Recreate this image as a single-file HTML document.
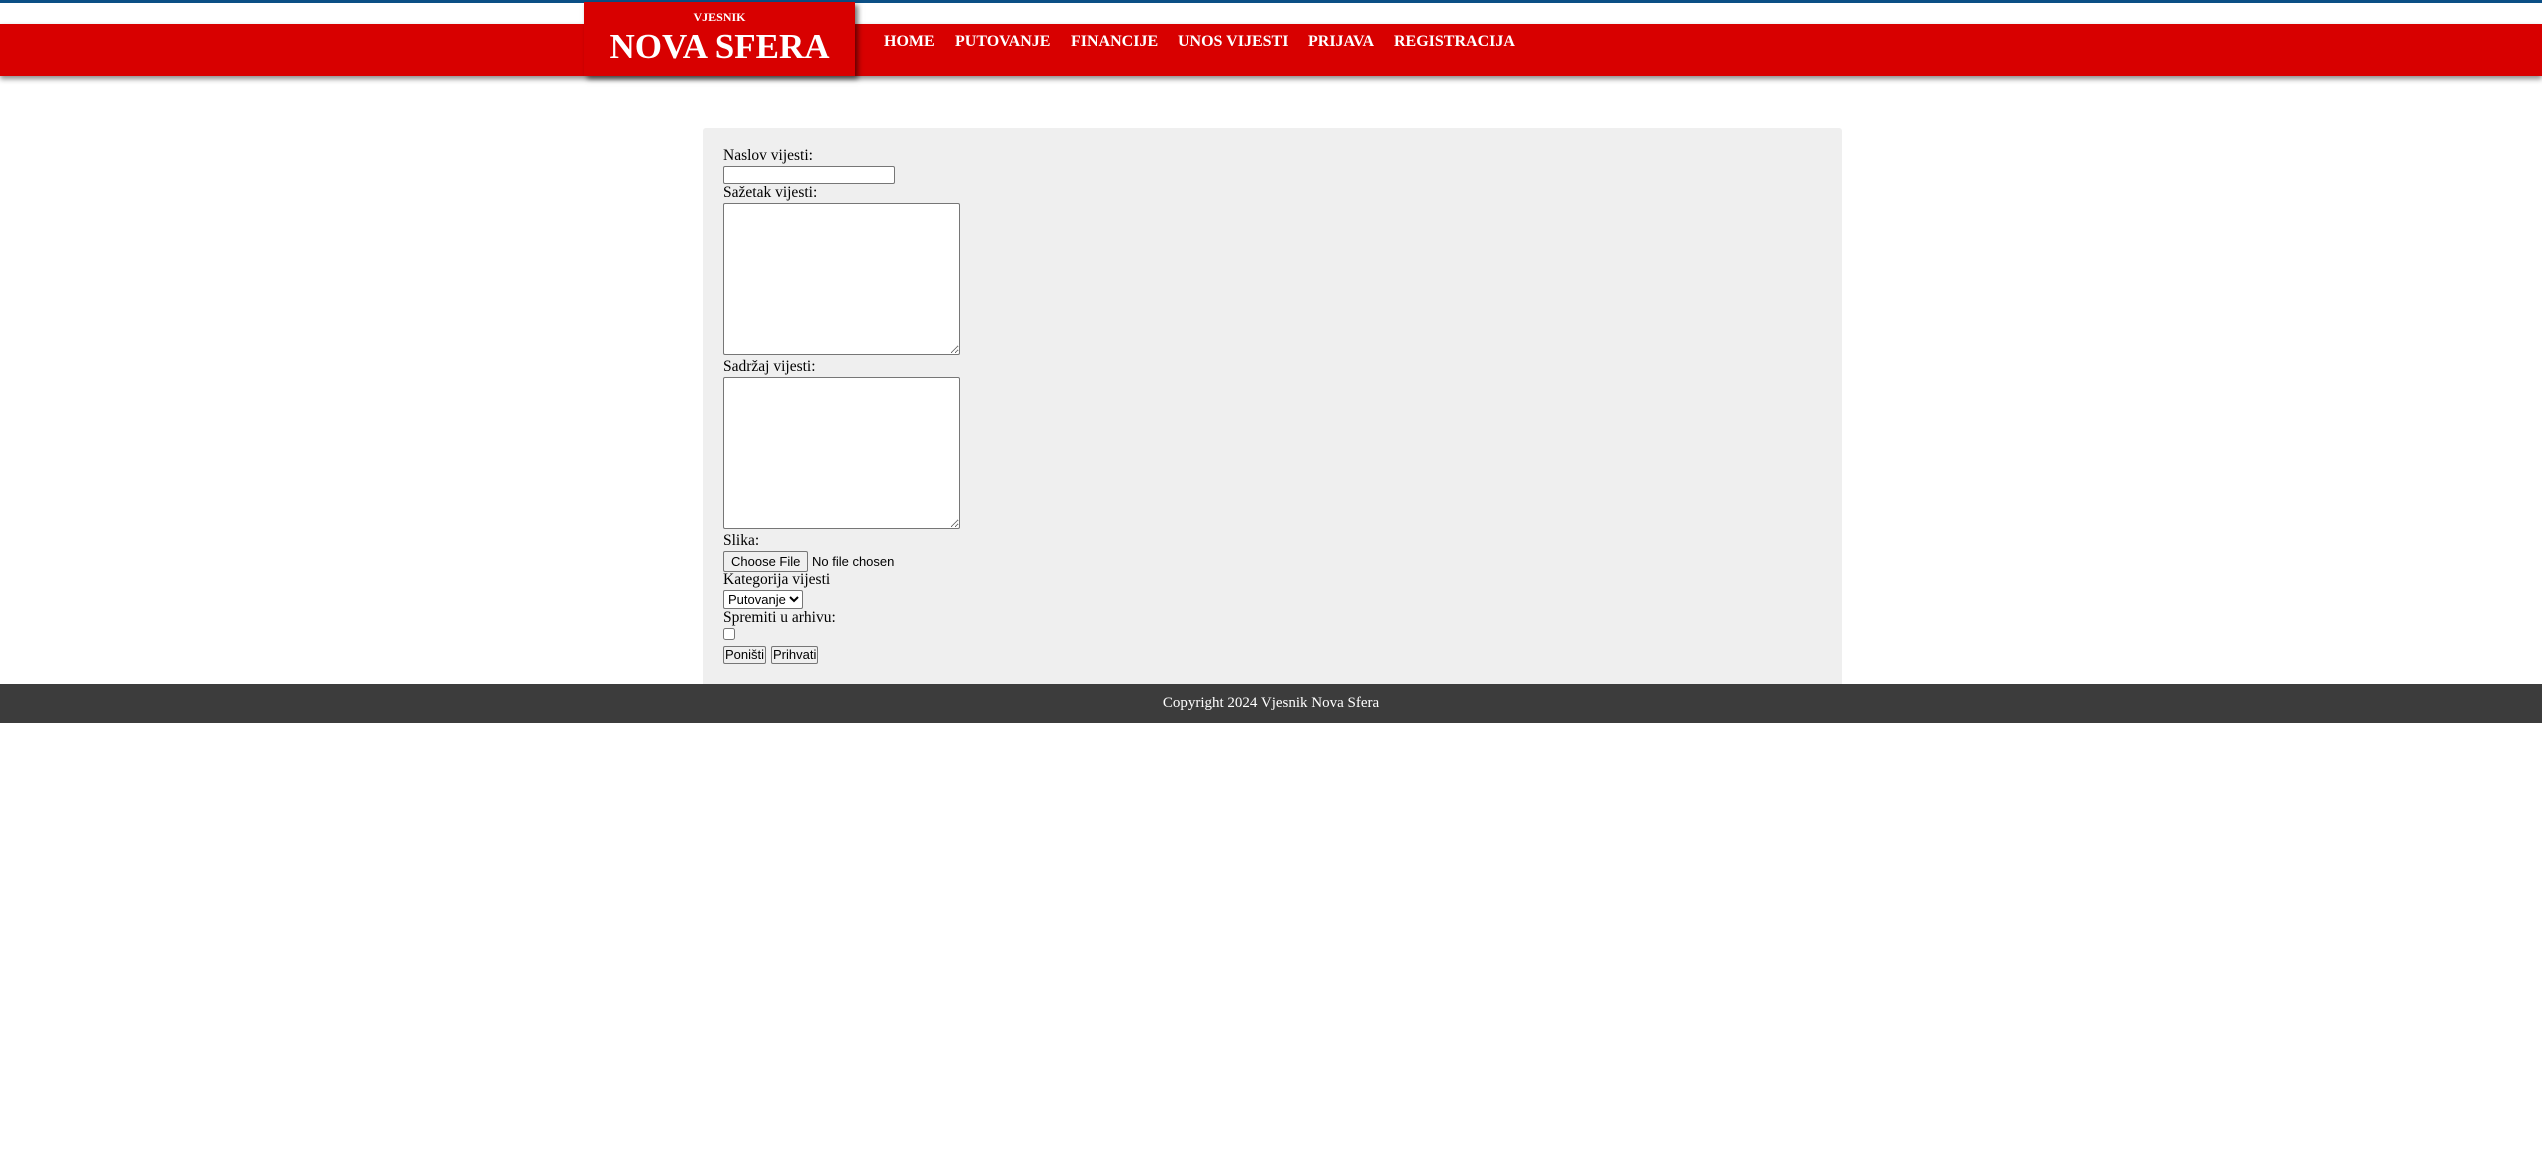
<!DOCTYPE html>
<html><head><meta charset="utf-8"><style>
*{margin:0;padding:0;box-sizing:border-box}
html,body{width:2542px;height:1161px;background:#fff;overflow:hidden;font-family:"Liberation Serif",serif;}
.top{position:absolute;left:0;top:0;width:2542px;height:3px;background:#0b4f85;}
.red{position:absolute;left:0;top:24px;width:2542px;height:52px;background:#d80000;box-shadow:0 3px 5px rgba(0,0,0,.45);}
.logo{position:absolute;left:584px;top:2px;width:271px;height:74px;background:#d80000;box-shadow:3px 3px 5px rgba(0,0,0,.55);color:#fff;text-align:center;font-weight:bold;}
.logo .s{position:absolute;top:8px;left:0;width:100%;font-size:12px;}
.logo .b{position:absolute;top:23px;left:0;width:100%;font-size:35px;line-height:44px;}
.nav{position:absolute;top:33px;color:#fff;font-weight:bold;font-size:16px;}
.panel{position:absolute;left:703px;top:128px;width:1139px;height:556px;background:#efefef;border-radius:3px 3px 0 0;}
.lbl{position:absolute;left:723px;font-size:15.5px;color:#000;line-height:18px;}
input[type=text]{position:absolute;left:723px;top:166px;width:172px;height:18px;border:1px solid #767676;border-radius:2px;background:#fff;}
textarea{position:absolute;left:723px;width:237px;height:152px;border:1px solid #767676;border-radius:2px;background:#fff;resize:both;}
.file{position:absolute;left:723px;top:551px;font-family:"Liberation Sans",sans-serif;font-size:13px;}
.file span.btn{display:inline-block;border:1px solid #767676;border-radius:2px;background:#efefef;height:21px;line-height:19px;padding:0 7px;}
select{position:absolute;left:723px;top:590px;height:19px;font-family:"Liberation Sans",sans-serif;font-size:13px;border:1px solid #767676;border-radius:2px;background:#fff;}
input[type=checkbox]{position:absolute;left:723px;top:628px;width:12px;height:12px;margin:0;}
button{position:absolute;top:646px;height:18px;font-family:"Liberation Sans",sans-serif;font-size:13px;border:1px solid #767676;border-radius:2px;background:#efefef;padding:0 1px;line-height:16px;}
.foot{position:absolute;left:0;top:684px;width:2542px;height:39px;background:#3c3c3c;color:#fff;font-size:15px;text-align:center;line-height:39px;}
</style></head><body>
<div class="top"></div>
<div class="red"></div>
<div class="logo"><div class="s">VJESNIK</div><div class="b">NOVA SFERA</div></div>
<div class="nav" style="left:884px">HOME</div>
<div class="nav" style="left:955px">PUTOVANJE</div>
<div class="nav" style="left:1071px">FINANCIJE</div>
<div class="nav" style="left:1178px">UNOS VIJESTI</div>
<div class="nav" style="left:1308px">PRIJAVA</div>
<div class="nav" style="left:1394px">REGISTRACIJA</div>
<div class="panel"></div>
<div class="lbl" style="top:147px">Naslov vijesti:</div>
<input type="text">
<div class="lbl" style="top:184px">Sažetak vijesti:</div>
<textarea style="top:203px"></textarea>
<div class="lbl" style="top:358px">Sadržaj vijesti:</div>
<textarea style="top:377px"></textarea>
<div class="lbl" style="top:532px">Slika:</div>
<div class="file"><span class="btn">Choose File</span> No file chosen</div>
<div class="lbl" style="top:571px">Kategorija vijesti</div>
<select><option>Putovanje</option></select>
<div class="lbl" style="top:609px">Spremiti u arhivu:</div>
<input type="checkbox">
<button style="left:723px">Poništi</button>
<button style="left:771px">Prihvati</button>
<div class="foot">Copyright 2024 Vjesnik Nova Sfera</div>
</body></html>
